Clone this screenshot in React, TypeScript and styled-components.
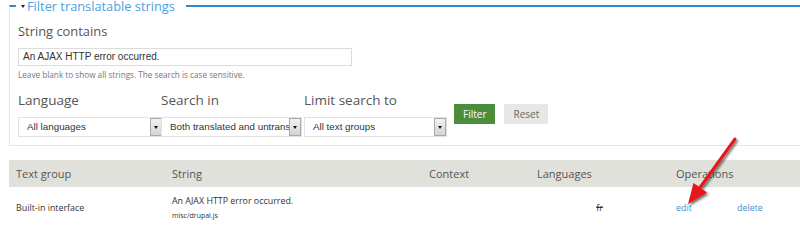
import React from "react";
import styled, { createGlobalStyle } from "styled-components";

const GlobalStyle = createGlobalStyle`
  html, body {
    margin: 0;
    padding: 0;
    background: #ffffff;
  }
  body {
    font-family: "Open Sans", "DejaVu Sans", sans-serif;
    color: #555555;
  }
`;

const Page = styled.div`
  position: relative;
  width: 800px;
  height: 246px;
  overflow: hidden;
`;

const Fieldset = styled.fieldset`
  margin: -2px 0 0 9px;
  padding: 0 0 8px 8px;
  min-width: 0;
  border: 1px solid #e6e6e6;
  border-top: 2px solid #2b8ad8;
  border-right: none;
`;

const Legend = styled.legend`
  margin-left: -2px;
  padding: 0 11px 0 5px;
  font-size: 12.8px;
  line-height: 16px;
  color: #4aa3df;
`;

const Caret = styled.span`
  display: inline-block;
  width: 0;
  height: 0;
  border-left: 2.5px solid transparent;
  border-right: 2.5px solid transparent;
  border-top: 3px solid #222;
  margin-right: 2px;
  vertical-align: 3px;
`;

const FieldLabel = styled.div`
  margin-top: 9px;
  font-size: 12.9px;
  line-height: 16px;
  color: #555;
`;

const TextInput = styled.div`
  box-sizing: border-box;
  margin-top: 9px;
  width: 334px;
  height: 18px;
  padding: 0 4px;
  border: 1px solid #dcdcdc;
  font-family: "Liberation Sans", Arial, sans-serif;
  font-size: 10px;
  line-height: 16px;
  color: #333;
`;

const Description = styled.div`
  margin-top: 3px;
  font-size: 8.2px;
  line-height: 11px;
  color: #777;
`;

const FilterRow = styled.div`
  display: flex;
  align-items: flex-start;
  margin-top: 11px;
`;

const FormItem = styled.div<{ $w: number }>`
  display: flex;
  flex-direction: column;
  width: ${(p) => p.$w}px;
`;

const ItemLabel = styled.div`
  font-size: 13.5px;
  line-height: 18px;
  color: #555;
  margin-bottom: 8px;
  white-space: nowrap;
`;

const SelectBox = styled.div<{ $w: number }>`
  box-sizing: border-box;
  display: flex;
  align-items: stretch;
  width: ${(p) => p.$w}px;
  height: 20px;
  border: 1px solid #e2e2e2;
  background: #fff;
`;

const SelectText = styled.div`
  flex: 1;
  min-width: 0;
  overflow: hidden;
  white-space: nowrap;
  padding-left: 8px;
  font-family: "Liberation Sans", Arial, sans-serif;
  font-size: 9.8px;
  line-height: 18px;
  color: #333;
`;

const SelectArrow = styled.div`
  flex: none;
  width: 10px;
  display: flex;
  align-items: center;
  justify-content: center;
  border: 1px solid #a9a9a9;
  background: linear-gradient(#f2f2f2, #d4d4d4);
  &::after {
    content: "";
    border-left: 2.5px solid transparent;
    border-right: 2.5px solid transparent;
    border-top: 3px solid #111;
  }
`;

const Actions = styled.div`
  display: flex;
  gap: 9px;
  margin-top: 13px;
  margin-left: 7px;
`;

const Button = styled.div<{ $primary?: boolean }>`
  box-sizing: border-box;
  height: 20px;
  padding: 0 9px;
  font-size: 10px;
  line-height: 20px;
  background: ${(p) => (p.$primary ? "#4b8c3d" : "#e7e7e7")};
  color: ${(p) => (p.$primary ? "#ffffff" : "#666666")};
`;

const Table = styled.table`
  margin: 14px 0 0 9px;
  width: 791px;
  border-collapse: collapse;
  table-layout: fixed;
`;

const Col = styled.col<{ $w: number }>`
  width: ${(p) => p.$w}px;
`;

const HeadCell = styled.th`
  height: 27px;
  padding: 0 7px;
  text-align: left;
  font-weight: normal;
  font-size: 11px;
  color: #555;
  background: #e1e1dc;
  white-space: nowrap;
`;

const Cell = styled.td<{ $center?: boolean }>`
  height: 40px;
  padding: 0 7px;
  vertical-align: middle;
  font-size: 8.9px;
  color: #333;
  white-space: nowrap;
  text-align: ${(p) => (p.$center ? "center" : "left")};
`;

const Source = styled.div`
  margin-top: 4px;
  font-size: 7px;
  color: #333;
`;

const Untranslated = styled.span`
  text-decoration: line-through;
  color: #333;
`;

const Link = styled.span`
  color: #3f8fd2;
`;

const ArrowOverlay = styled.svg`
  position: absolute;
  left: 0;
  top: 0;
  pointer-events: none;
`;

const selects = [
  { label: "Language", value: "All languages", w: 143, box: 145 },
  { label: "Search in", value: "Both translated and untranslated strings", w: 143, box: 141 },
  { label: "Limit search to", value: "All text groups", w: 143, box: 143 },
];

const App = () => {
  return (
    <Page>
      <GlobalStyle />
      <Fieldset>
        <Legend>
          <Caret />
          Filter translatable strings
        </Legend>
        <FieldLabel>String contains</FieldLabel>
        <TextInput>An AJAX HTTP error occurred.</TextInput>
        <Description>
          Leave blank to show all strings. The search is case sensitive.
        </Description>
        <FilterRow>
          {selects.map((s) => (
            <FormItem key={s.label} $w={s.w}>
              <ItemLabel>{s.label}</ItemLabel>
              <SelectBox $w={s.box}>
                <SelectText>{s.value}</SelectText>
                <SelectArrow />
              </SelectBox>
            </FormItem>
          ))}
          <Actions>
            <Button $primary>Filter</Button>
            <Button>Reset</Button>
          </Actions>
        </FilterRow>
      </Fieldset>

      <Table>
        <colgroup>
          <Col $w={156} />
          <Col $w={257} />
          <Col $w={108} />
          <Col $w={139} />
          <Col $w={61} />
          <Col $w={70} />
        </colgroup>
        <thead>
          <tr>
            <HeadCell>Text group</HeadCell>
            <HeadCell>String</HeadCell>
            <HeadCell>Context</HeadCell>
            <HeadCell>Languages</HeadCell>
            <HeadCell colSpan={2}>Operations</HeadCell>
          </tr>
        </thead>
        <tbody>
          <tr>
            <Cell>Built-in interface</Cell>
            <Cell>
              An AJAX HTTP error occurred.
              <Source>misc/drupal.js</Source>
            </Cell>
            <Cell />
            <Cell $center>
              <Untranslated>fr</Untranslated>
            </Cell>
            <Cell>
              <Link>edit</Link>
            </Cell>
            <Cell>
              <Link>delete</Link>
            </Cell>
          </tr>
        </tbody>
      </Table>

      <ArrowOverlay width="800" height="246" viewBox="0 0 800 246">
        <defs>
          <filter id="arrowShadow" x="-50%" y="-50%" width="200%" height="200%">
            <feDropShadow dx="1.5" dy="2" stdDeviation="1.2" floodColor="#000" floodOpacity="0.55" />
          </filter>
        </defs>
        <g filter="url(#arrowShadow)">
          <line x1="735" y1="139" x2="699" y2="189" stroke="#e8141b" strokeWidth="3" strokeLinecap="round" />
          <polygon points="688,204 693.5,183 707,192.5" fill="#e8141b" />
        </g>
      </ArrowOverlay>
    </Page>
  );
};

export default App;
